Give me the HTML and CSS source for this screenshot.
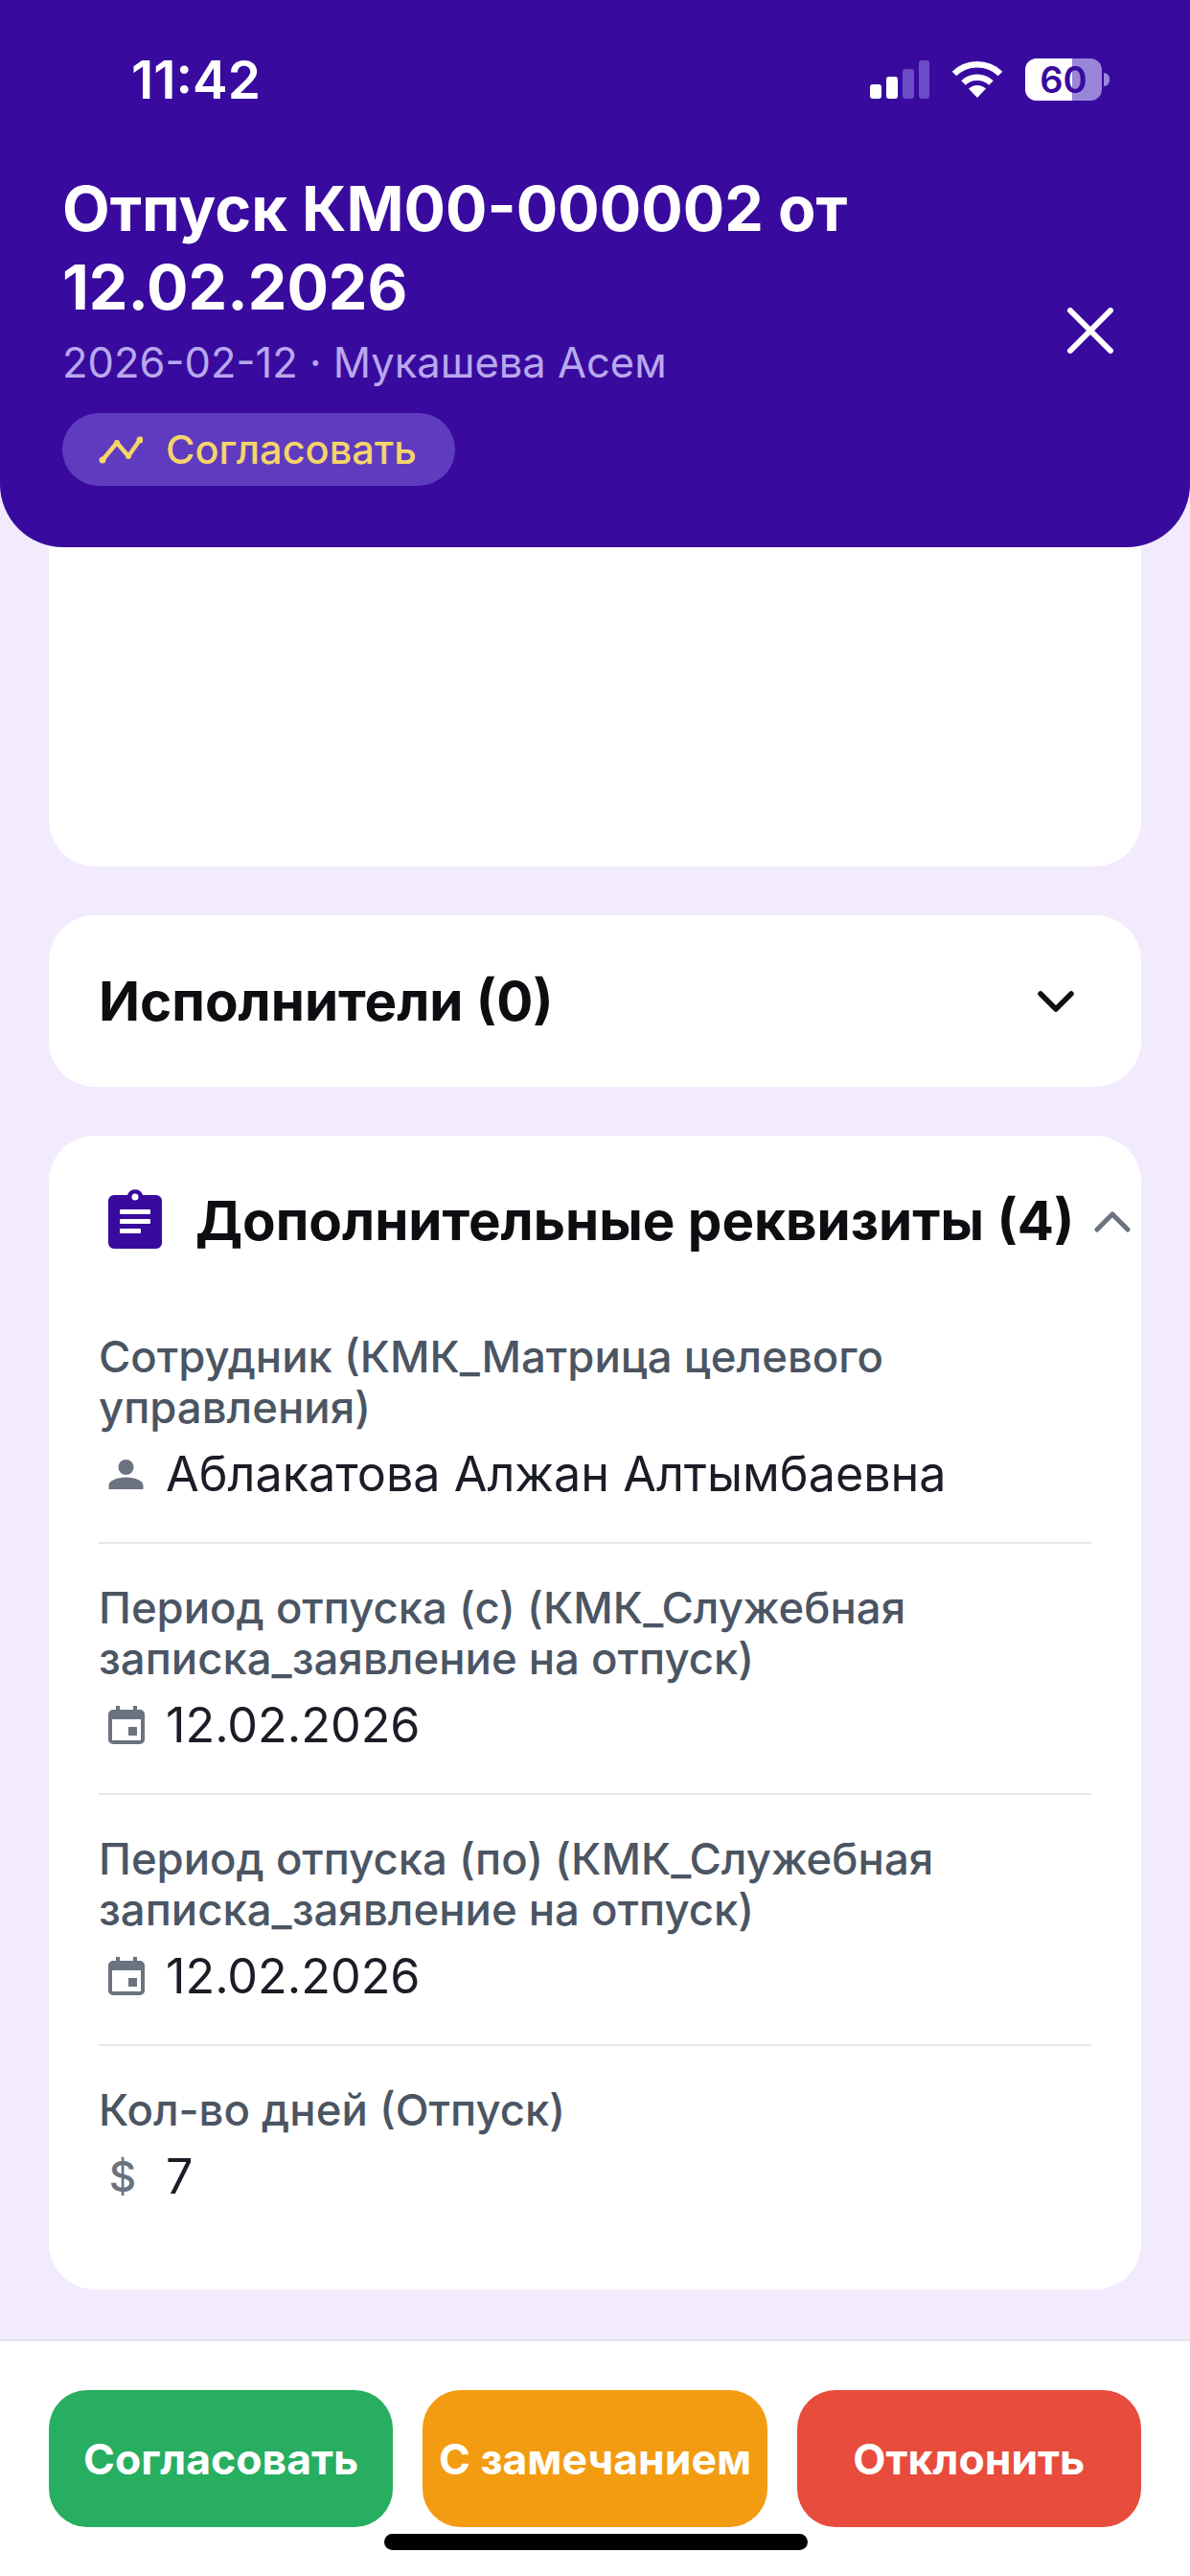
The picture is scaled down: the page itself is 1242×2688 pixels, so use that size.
FILE: index.html
```html
<!DOCTYPE html>
<html lang="ru">
<head>
<meta charset="utf-8">
<title>Отпуск</title>
<link rel="stylesheet" href="styles.css">
</head>
<body>
<div class="screen">
  <header class="header">
    <div class="status">
      <span class="time">11:42</span>
      <div class="status-icons">
        <svg class="signal" width="62" height="40" viewBox="0 0 62 40"><rect x="0" y="25" width="12" height="15" rx="3" fill="#fff"/><rect x="17" y="17" width="12" height="23" rx="3" fill="#fff"/><rect x="34" y="9" width="12" height="31" rx="3" fill="#6a4cc6"/><rect x="51" y="0" width="11" height="40" rx="3" fill="#6a4cc6"/></svg>
        <svg class="wifi" width="54" height="38" viewBox="0 0 54 38"><path d="M27 38 18 28.500a13 13 0 0 1 18 0Z" fill="#fff"/><path d="M12.500 22.500a21 21 0 0 1 29 0" fill="none" stroke="#fff" stroke-width="6.500"/><path d="M3 13a34.500 34.500 0 0 1 48 0" fill="none" stroke="#fff" stroke-width="6.500"/></svg>
        <div class="battery"><div class="battery-body"><span class="battery-level"></span><span class="battery-text">60</span></div><span class="battery-tip"></span></div>
      </div>
    </div>
    <div class="head-main">
      <div class="head-text">
        <h1 class="title">Отпуск КМ00-000002 от 12.02.2026</h1>
        <p class="subtitle">2026-02-12 · Мукашева Асем</p>
        <div class="pill">
          <svg width="46" height="30" viewBox="0 0 46 30"><path d="M4 26 19 8 31 22 43 5" fill="none" stroke="#f5d46a" stroke-width="4.500" stroke-linecap="round" stroke-linejoin="round"/><circle cx="4" cy="26" r="3.500" fill="#f5d46a"/><circle cx="19" cy="8" r="3" fill="#f5d46a"/><circle cx="31" cy="22" r="3" fill="#f5d46a"/><circle cx="43" cy="5" r="3.500" fill="#f5d46a"/></svg>
          <span>Согласовать</span>
        </div>
      </div>
      <svg class="close" width="48" height="48" viewBox="0 0 48 48"><path d="M3 3 45 45M45 3 3 45" stroke="#fff" stroke-width="6" stroke-linecap="round"/></svg>
    </div>
  </header>

  <main class="content">
    <section class="card card-blank"></section>
    <section class="card card-collapsed">
      <h2 class="card-title">Исполнители (0)</h2>
      <svg class="chev" width="38" height="24" viewBox="0 0 38 24"><path d="M3 4 19 20 35 4" fill="none" stroke="#111" stroke-width="5.500" stroke-linecap="round" stroke-linejoin="round"/></svg>
    </section>
    <section class="card card-details">
      <div class="details-head">
        <svg class="clip" width="58" height="64" viewBox="0 0 58 64"><path d="M7 7h14a8.500 8.500 0 0 1 16 0h14a6 6 0 0 1 6 6v44a6 6 0 0 1-6 6H7a6 6 0 0 1-6-6V13a6 6 0 0 1 6-6Z" fill="#380b9e"/><circle cx="29" cy="9" r="3.500" fill="#fff"/><rect x="13" y="22" width="32" height="5" rx="1" fill="#fff"/><rect x="13" y="32" width="32" height="5" rx="1" fill="#fff"/><rect x="13" y="42" width="22" height="5" rx="1" fill="#fff"/></svg>
        <h2 class="card-title">Дополнительные реквизиты (4)</h2>
        <svg class="chev-up" width="38" height="24" viewBox="0 0 38 24"><path d="M3 20 19 4 35 20" fill="none" stroke="#6b7280" stroke-width="5" stroke-linecap="round" stroke-linejoin="round"/></svg>
      </div>

      <div class="field">
        <div class="label">Сотрудник (КМК_Матрица целевого управления)</div>
        <div class="value">
          <svg class="ico person" width="36" height="34" viewBox="0 0 36 34"><circle cx="18" cy="10" r="8" fill="#6b7280"/><path d="M0 33v-4c0-5 9-8.500 18-8.500s18 3.500 18 8.500v4Z" fill="#6b7280"/></svg>
          <span>Аблакатова Алжан Алтымбаевна</span>
        </div>
      </div>
      <div class="field">
        <div class="label">Период отпуска (с) (КМК_Служебная записка_заявление на отпуск)</div>
        <div class="value">
          <svg class="ico" width="40" height="40" viewBox="0 0 40 40"><path d="M9 0h4v4h14V0h4v4h3a5 5 0 0 1 5 5v26a5 5 0 0 1-5 5H6a5 5 0 0 1-5-5V9a5 5 0 0 1 5-5h3Z" fill="#6b7280"/><rect x="5" y="14" width="30" height="22" fill="#fff"/><rect x="22" y="22" width="9" height="9" fill="#6b7280"/></svg>
          <span>12.02.2026</span>
        </div>
      </div>
      <div class="field">
        <div class="label">Период отпуска (по) (КМК_Служебная записка_заявление на отпуск)</div>
        <div class="value">
          <svg class="ico" width="40" height="40" viewBox="0 0 40 40"><path d="M9 0h4v4h14V0h4v4h3a5 5 0 0 1 5 5v26a5 5 0 0 1-5 5H6a5 5 0 0 1-5-5V9a5 5 0 0 1 5-5h3Z" fill="#6b7280"/><rect x="5" y="14" width="30" height="22" fill="#fff"/><rect x="22" y="22" width="9" height="9" fill="#6b7280"/></svg>
          <span>12.02.2026</span>
        </div>
      </div>
      <div class="field">
        <div class="label">Кол-во дней (Отпуск)</div>
        <div class="value">
          <span class="ico dollar">$</span>
          <span>7</span>
        </div>
      </div>
    </section>
  </main>

  <footer class="footer">
    <div class="btn btn-green">Согласовать</div>
    <div class="btn btn-orange">С замечанием</div>
    <div class="btn btn-red">Отклонить</div>
    <span class="home-bar"></span>
  </footer>
</div>
</body>
</html>
```

FILE: styles.css
```css
* { box-sizing: border-box; }
html, body { margin: 0; padding: 0; }
body { font-family: Inter, "Noto Sans", sans-serif; background: #f1ebfd; }

.screen { width: 1242px; height: 2688px; display: flex; flex-direction: column; overflow: hidden; background: #f1ebfd; }

.header { position: relative; z-index: 2; height: 571px; flex: none; background: #380b9e; border-radius: 0 0 66px 66px; padding: 61px 65px 0; }

.status { display: flex; justify-content: space-between; align-items: center; height: 44px; padding: 0 19px 0 72px; }
.time { font-size: 55px; font-weight: 600; color: #fff; }
.status-icons { display: flex; align-items: center; gap: 23px; }
.battery { display: flex; align-items: center; gap: 2px; }
.battery-body { position: relative; width: 80px; height: 44px; border-radius: 12px; background: #9a86d8; overflow: hidden; display: flex; align-items: center; justify-content: center; }
.battery-level { position: absolute; left: 0; top: 0; bottom: 0; width: 49px; background: #fff; }
.battery-text { position: relative; font-size: 38px; font-weight: 600; color: #380b9e; }
.battery-tip { width: 6px; height: 14px; border-radius: 0 6px 6px 0; background: #9a86d8; }

.head-main { display: flex; justify-content: space-between; align-items: center; margin-top: 72px; }
.head-text { width: 900px; }
.title { margin: 0; font-size: 64.500px; line-height: 82px; font-weight: 700; color: #fff; }
.subtitle { margin: 12px 0 0; font-size: 43.500px; line-height: 50px; font-weight: 400; color: #b9a8ee; }
.pill { display: inline-flex; align-items: center; gap: 24px; height: 76px; margin-top: 28px; padding: 0 40px 0 38px; border-radius: 38px; background: #5f3cbf; color: #f5d46a; font-size: 41.500px; font-weight: 500; }
.close { margin-right: 15px; margin-top: 6px; }

.content { flex: none; height: 1940px; margin-top: -70px; padding: 0 51px; display: flex; flex-direction: column; gap: 51px; overflow: hidden; }

.card { background: #fff; border-radius: 48px; flex: none; }
.card-blank { height: 403px; }
.card-collapsed { height: 179px; display: flex; align-items: center; justify-content: space-between; padding: 0 70px 0 52px; }
.card-title { margin: 0; font-size: 56.500px; line-height: 64px; font-weight: 700; color: #0d0d12; white-space: nowrap; }
.card-details { height: 1204px; padding: 55px 52px 0; }

.details-head { display: flex; align-items: center; gap: 34px; margin-left: 9px; height: 64px; margin-bottom: 85px; position: relative; }
.details-head .card-title { position: relative; top: 2px; }
.chev-up { position: absolute; right: -41px; top: 23px; }

.field { padding-bottom: 42px; margin-bottom: 40px; border-bottom: 2px solid #e5e7eb; }
.field:last-child { border-bottom: 0; padding-bottom: 0; margin-bottom: 0; }
.label { font-size: 45.500px; line-height: 53px; font-weight: 500; color: #4b5563; }
.value { display: flex; align-items: center; gap: 20px; margin-top: 14px; min-height: 58px; font-size: 50.300px; line-height: 58px; font-weight: 400; color: #1a1d26; }
.ico { flex: none; width: 50px; padding-left: 8px; }
.person { padding-left: 7px; width: 50px; }
.dollar { font-size: 44px; font-weight: 500; color: #6b7280; text-align: center; padding-left: 0; }

.footer { position: relative; flex: 1; display: flex; gap: 31px; padding: 51px 51px 0; background: #fff; border-top: 2px solid #e2e0e8; }
.btn { flex: 1; height: 143px; display: flex; align-items: center; justify-content: center; border-radius: 40px; color: #fff; font-size: 44.500px; font-weight: 700; white-space: nowrap; }
.btn-green { background: #27ae60; }
.btn-orange { background: #f39c12; }
.btn-red { background: #e74c3c; }
.home-bar { position: absolute; left: 401px; bottom: 27px; width: 442px; height: 17px; border-radius: 9px; background: #000; }
```
